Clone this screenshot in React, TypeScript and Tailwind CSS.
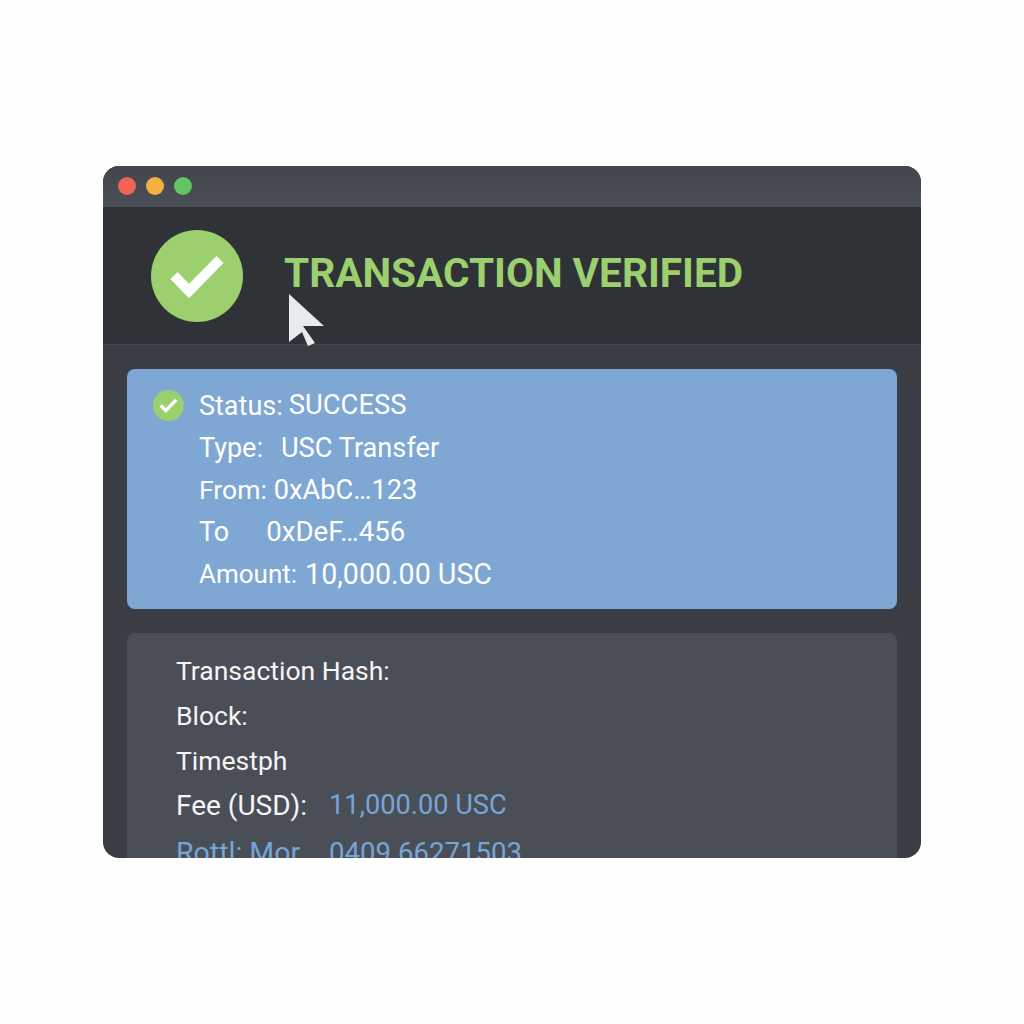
import React from 'react';

const font = { fontFamily: 'Roboto, sans-serif' };

const summaryRows = [
  { label: 'Status:', value: 'SUCCESS', labelSize: 'text-[27px]', valueSize: 'text-[27.4px]', gap: 'ml-[6px]' },
  { label: 'Type:', value: 'USC Transfer', labelSize: 'text-[27px]', valueSize: 'text-[27.2px]', gap: 'ml-[18px]' },
  { label: 'From:', value: '0xAbC…123', labelSize: 'text-[26.5px]', valueSize: 'text-[27.2px]', gap: 'ml-[7px]' },
  { label: 'To', value: '0xDeF…456', labelSize: 'text-[27px]', valueSize: 'text-[27.6px]', gap: 'ml-[37px]' },
  { label: 'Amount:', value: '10,000.00 USC', labelSize: 'text-[26px]', valueSize: 'text-[28.6px]', gap: 'ml-[8px]' },
];

const Check = ({ className }: { className: string }) => (
  <svg viewBox="0 0 92 92" className={className}>
    <circle cx="46" cy="46" r="46" fill="#9ccf6e" />
    <path d="M23 45.5 L38 61 L69 29.5" fill="none" stroke="#fff" strokeWidth="10" />
  </svg>
);

export default function App() {
  return (
    <div className="min-h-[1024px] bg-[#fefefe] pt-[166px] pl-[103px]" style={font}>
      <div className="relative w-[818px] h-[692px] rounded-[16px] overflow-hidden bg-[#3a3d44] flex flex-col">
        {/* Title bar */}
        <div className="h-[41px] shrink-0 bg-linear-to-b from-[#42454c] to-[#4b4f57] flex items-center gap-[10px] pl-[15px] pb-[2px]">
          <div className="w-[18px] h-[18px] rounded-full bg-[#ee6459]" />
          <div className="w-[18px] h-[18px] rounded-full bg-[#f6b03f]" />
          <div className="w-[18px] h-[18px] rounded-full bg-[#62c462]" />
        </div>

        {/* Header */}
        <div className="h-[138px] shrink-0 bg-[#2f3237] border-b border-[#44474e] flex items-center pl-[48px]">
          <Check className="w-[92px] h-[92px] shrink-0" />
          <h1 className="ml-[41px] mb-[5px] text-[40.6px] font-bold text-[#9ccf6e] whitespace-nowrap leading-none">
            TRANSACTION VERIFIED
          </h1>
        </div>

        {/* Summary */}
        <div className="mt-[24px] mx-[24px] h-[240px] shrink-0 rounded-[8px] bg-[#7ea7d4] pt-[16px] pl-[26px] relative">
          <Check className="absolute left-[26px] top-[21px] w-[31px] h-[31px]" />
          {summaryRows.map((row) => (
            <div key={row.label} className="h-[42px] pl-[46px] flex items-center text-white whitespace-nowrap">
              <span className={row.labelSize}>{row.label}</span>
              <span className={`${row.gap} ${row.valueSize}`}>{row.value}</span>
            </div>
          ))}
        </div>

        {/* Details */}
        <div className="mt-[24px] mx-[24px] flex-1 rounded-t-[8px] bg-[#4a4e57] pt-[15px] pl-[49px] text-[26.5px] text-[#f5f5f5] overflow-hidden">
          <div className="h-[45px] flex items-center">Transaction Hash:</div>
          <div className="h-[45px] flex items-center">Block:</div>
          <div className="h-[45px] flex items-center">Timestph</div>
          <div className="h-[45px] flex items-center whitespace-nowrap">
            <span className="w-[153px] text-[28px]">Fee (USD):</span>
            <span className="text-[#76a5d8] text-[27.2px]">11,000.00 USC</span>
          </div>
          <div className="h-[45px] pt-[5px] flex items-center whitespace-nowrap text-[#76a5d8]">
            <span className="w-[153px] text-[28.5px]">Rottl: Mor</span>
            <span className="text-[27.6px]">0409 66271503</span>
          </div>
        </div>

        {/* Cursor */}
        <svg viewBox="0 0 38 54" className="absolute left-[186px] top-[127px] w-[38px] h-[54px]">
          <path d="M0 1 L35 33 L14 33 L26 50 L19 53 L13 39 L0 49 Z" fill="#e8eaec" />
        </svg>
      </div>
    </div>
  );
}
